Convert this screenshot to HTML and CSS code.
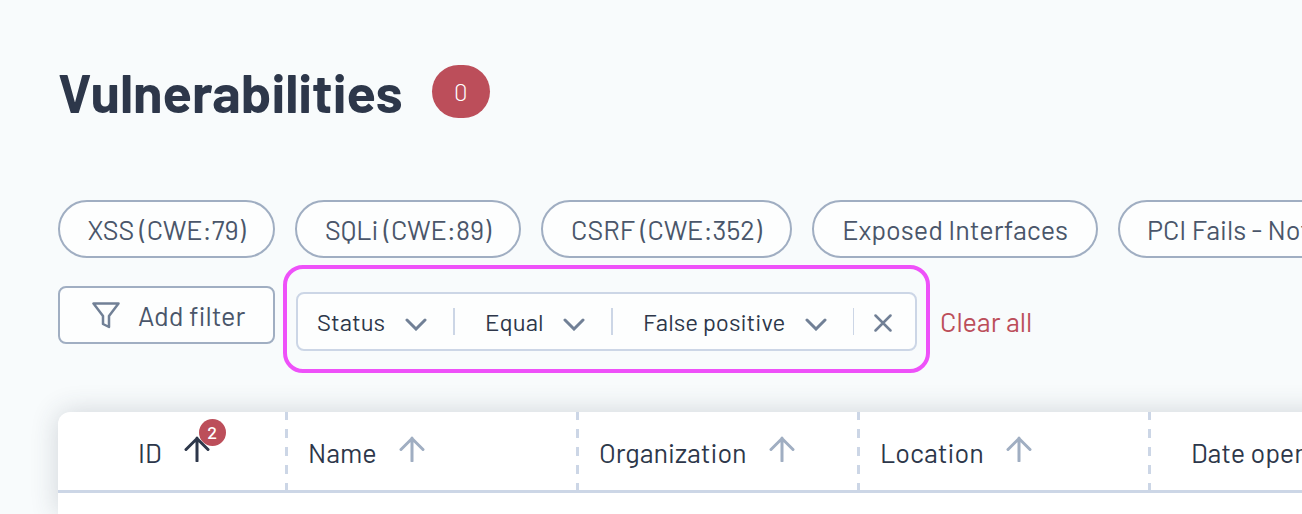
FILE: index.html
```html
<!DOCTYPE html>
<html lang="en">
<head>
    <meta charset="UTF-8">
    <meta name="viewport" content="width=device-width, initial-scale=1.0">
    <title>Vulnerabilities</title>
    <link rel="stylesheet" href="styles.css">
</head>
<body>
    <!-- Icons -->
    <svg class="sprite" aria-hidden="true">
        <symbol id="chevron" viewBox="0 0 22 14">
            <path d="M2 3 11 12 20 3" fill="none" stroke="currentColor" stroke-width="3" stroke-linecap="round"/>
        </symbol>
        <symbol id="arrow" viewBox="0 0 26 26">
            <path d="M13 25V2M2 13.500 13 2.500 24 13.500" fill="none" stroke="currentColor" stroke-width="3" stroke-linecap="round"/>
        </symbol>
    </svg>

    <main>
        <header class="title">
            <h1>Vulnerabilities</h1>
            <span class="count">0</span>
        </header>

        <!-- Quick filters -->
        <div class="chips">
            <button type="button" class="chip">XSS (CWE:79)</button>
            <button type="button" class="chip">SQLi (CWE:89)</button>
            <button type="button" class="chip">CSRF (CWE:352)</button>
            <button type="button" class="chip">Exposed Interfaces</button>
            <button type="button" class="chip last">PCI Fails - Not Fixed</button>
        </div>

        <!-- Active filters -->
        <div class="filters">
            <button type="button" class="add">
                <svg width="28" height="28" viewBox="0 0 28 28" fill="none" stroke="currentColor" stroke-width="2.500" stroke-linejoin="round">
                    <path d="M1.500 2.500H26.500L17 15V26L11 23V15Z"/>
                </svg>
                Add filter
            </button>
            <div class="filter">
                <button type="button" class="part field">Status <svg class="chevron"><use href="#chevron"/></svg></button>
                <button type="button" class="part operator">Equal <svg class="chevron"><use href="#chevron"/></svg></button>
                <button type="button" class="part value">False positive <svg class="chevron"><use href="#chevron"/></svg></button>
                <button type="button" class="remove" aria-label="Remove filter">
                    <svg width="18" height="18" viewBox="0 0 18 18" fill="none" stroke="currentColor" stroke-width="2.500" stroke-linecap="round">
                        <path d="M1.500 1.500 16.500 16.500M16.500 1.500 1.500 16.500"/>
                    </svg>
                </button>
            </div>
            <a href="#" class="clear">Clear all</a>
        </div>

        <!-- Results -->
        <div class="card">
            <table>
                <colgroup>
                    <col class="col-id">
                    <col class="col-name">
                    <col class="col-org">
                    <col class="col-name">
                    <col>
                </colgroup>
                <thead>
                    <tr>
                        <th class="id"><span class="head">ID <span class="sorted"><svg class="arrow"><use href="#arrow"/></svg><span class="order">2</span></span></span></th>
                        <th><span class="head">Name <svg class="arrow"><use href="#arrow"/></svg></span></th>
                        <th><span class="head">Organization <svg class="arrow"><use href="#arrow"/></svg></span></th>
                        <th><span class="head">Location <svg class="arrow"><use href="#arrow"/></svg></span></th>
                        <th class="date"><span class="head">Date opened <svg class="arrow"><use href="#arrow"/></svg></span></th>
                    </tr>
                </thead>
            </table>
        </div>
    </main>
</body>
</html>
```
FILE: styles.css
```css
* {
    box-sizing: border-box;
}
body {
    margin: 0;
    min-height: 100vh;
    background: #f8fbfc;
    color: #2d374a;
    font-family: Barlow, Roboto, sans-serif;
    font-size: 27px;
    overflow: hidden;
}
button {
    font: inherit;
    color: inherit;
    cursor: pointer;
}
.sprite {
    position: absolute;
    width: 0;
    height: 0;
}
main {
    display: flex;
    flex-direction: column;
    min-height: 100vh;
    padding: 60px 0 0 58px;
}

/* Title */
.title {
    display: flex;
    align-items: center;
    gap: 29px;
    height: 62px;
}
h1 {
    margin: 0;
    padding-top: 2px;
    font-size: 54px;
    line-height: 62px;
    font-weight: 700;
}
.count {
    width: 58px;
    border-radius: 27px;
    background: #bc4e5a;
    color: #fff;
    font-size: 24px;
    line-height: 53px;
    font-weight: 300;
    text-align: center;
}

/* Quick filters */
.chips {
    display: grid;
    grid-template-columns: 217px 226px 251px 286px 300px;
    column-gap: 20px;
    margin-top: 78px;
}
.chip {
    height: 58px;
    padding: 0;
    border: 2px solid #a0aec2;
    border-radius: 29px;
    background: #fdfefe;
    color: #4a566a;
    white-space: nowrap;
}
.last {
    padding-left: 27px;
    text-align: left;
}

/* Active filters */
.filters {
    display: flex;
    align-items: flex-start;
    margin-top: 28px;
}
.add {
    display: flex;
    align-items: center;
    gap: 18px;
    width: 217px;
    height: 58px;
    padding: 0 0 0 32px;
    border: 2px solid #a0aec2;
    border-radius: 8px;
    background: #fdfefe;
    color: #4a566a;
}
.add svg {
    color: #718096;
}
.filter {
    position: relative;
    display: flex;
    align-items: center;
    width: 621px;
    height: 59px;
    margin: 6px 0 0 21px;
    border: 2px solid #ccd6e6;
    border-radius: 8px;
    background: #fdfefe;
    font-size: 24px;
}
.filter::after {
    content: "";
    position: absolute;
    inset: -29px -15px -24px;
    border: 4px solid #ee51f9;
    border-radius: 20px;
    pointer-events: none;
}
.part {
    display: flex;
    align-items: center;
    justify-content: space-between;
    height: 27px;
    padding: 0 26px 0 30px;
    border: 0;
    border-right: 2px solid #ccd6e6;
    background: none;
    line-height: 27px;
    white-space: nowrap;
}
.field {
    width: 157px;
    padding-left: 19px;
}
.operator {
    width: 158px;
}
.value {
    width: 241px;
    border-right-width: 1px;
}
.chevron {
    width: 22px;
    height: 14px;
    margin-top: 4px;
    color: #718096;
}
.remove {
    display: flex;
    justify-content: center;
    flex: 1;
    padding: 2px 4px 0 0;
    border: 0;
    background: none;
    color: #718096;
}
.clear {
    margin: 19px 0 0 23px;
    color: #bc4e5a;
    line-height: 32px;
    text-decoration: none;
}

/* Results */
.card {
    flex: 1;
    margin: 61px -40px 0 0;
    border-radius: 12px 0 0 0;
    background: #fff;
    box-shadow: 0 0 28px rgba(45, 55, 74, 0.2);
}
table {
    width: 100%;
    table-layout: fixed;
    border-collapse: separate;
    border-spacing: 0;
}
.col-id {
    width: 230px;
}
.col-name {
    width: 291px;
}
.col-org {
    width: 281px;
}
th {
    height: 81px;
    padding: 2px 0 0 20px;
    border-bottom: 3px solid #ccd6e6;
    background: repeating-linear-gradient(#ccd6e6 0 9px, transparent 9px 18px) right -1px / 3px 90px no-repeat;
    font-weight: 400;
    text-align: left;
    white-space: nowrap;
}
th.id {
    padding-left: 80px;
}
th.date {
    padding-left: 40px;
    background: none;
}
.head {
    display: flex;
    align-items: center;
    gap: 22px;
}
.arrow {
    display: block;
    flex: none;
    width: 26px;
    height: 26px;
    margin-bottom: 6px;
    color: #a0aec2;
}
.sorted {
    position: relative;
}
.sorted .arrow {
    color: #2d374a;
}
.order {
    position: absolute;
    top: -17px;
    left: 15px;
    width: 27px;
    border-radius: 50%;
    background: #bc4e5a;
    color: #fff;
    font-size: 18px;
    font-weight: 500;
    line-height: 27px;
    text-align: center;
}
```
